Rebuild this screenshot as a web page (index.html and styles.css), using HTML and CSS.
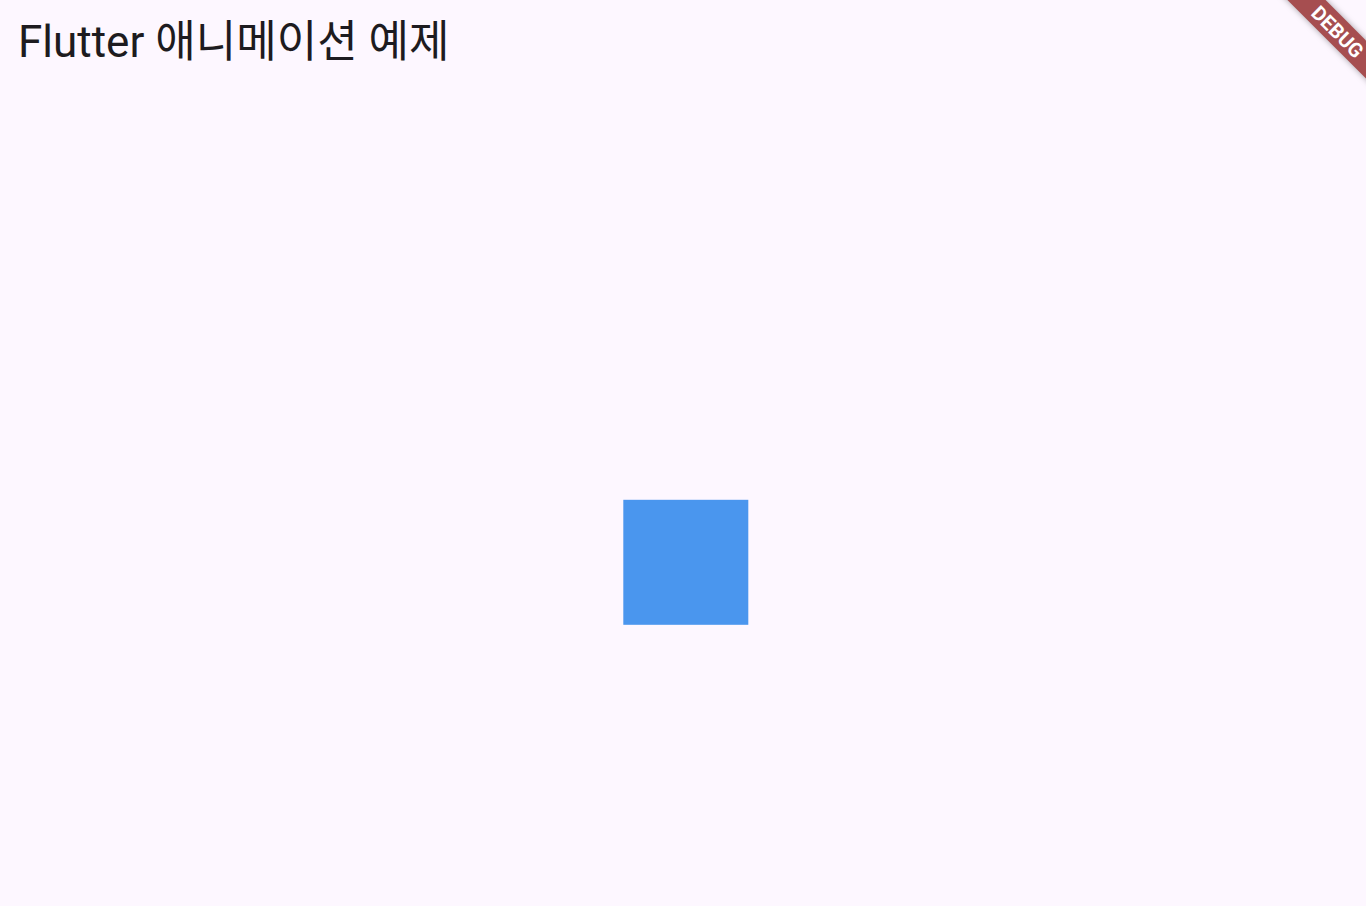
FILE: index.html
```html
<!DOCTYPE html>
<html lang="ko">
<head>
<meta charset="utf-8">
<title>Flutter 애니메이션 예제</title>
<link rel="stylesheet" href="styles.css">
</head>
<body>
<div class="app">
  <header class="app-bar">
    <h1 class="title">Flutter 애니메이션 예제</h1>
  </header>
  <main class="content">
    <div class="square"></div>
  </main>
</div>
<div class="banner-clip">
  <div class="banner"><span class="banner-text">DEBUG</span></div>
</div>
</body>
</html>
```

FILE: styles.css
```css
html, body {
  margin: 0;
  padding: 0;
  height: 100%;
}
body {
  background: #fdf7ff;
  font-family: Roboto, "Noto Sans CJK KR", sans-serif;
  color: #1d1b20;
  overflow: hidden;
}
.app {
  display: flex;
  flex-direction: column;
  height: 906px;
}
.app-bar {
  height: 84px;
  display: flex;
  align-items: center;
  padding-left: 18px;
  flex: none;
}
.title {
  margin: 0;
  font-weight: 400;
  font-size: 44px;
  line-height: 1;
}
.content {
  flex: 1;
  display: flex;
  align-items: center;
  justify-content: center;
}
.square {
  width: 125px;
  height: 125px;
  background: #4a96ee;
  transform: translate(2.3px, 66.8px);
}
.banner-clip {
  position: absolute;
  top: 0;
  right: 0;
  width: 100px;
  height: 100px;
  overflow: hidden;
}
.banner {
  position: absolute;
  left: -28px;
  top: 18px;
  width: 200px;
  height: 27px;
  background: #a64e50;
  box-shadow: 0 0 6px rgba(0, 0, 0, 0.35);
  transform: rotate(45deg);
  display: flex;
  align-items: center;
  justify-content: center;
}
.banner-text {
  color: #ffffff;
  font-family: Roboto, sans-serif;
  font-weight: 700;
  font-size: 20px;
  line-height: 1;
  letter-spacing: 0;
}
```
